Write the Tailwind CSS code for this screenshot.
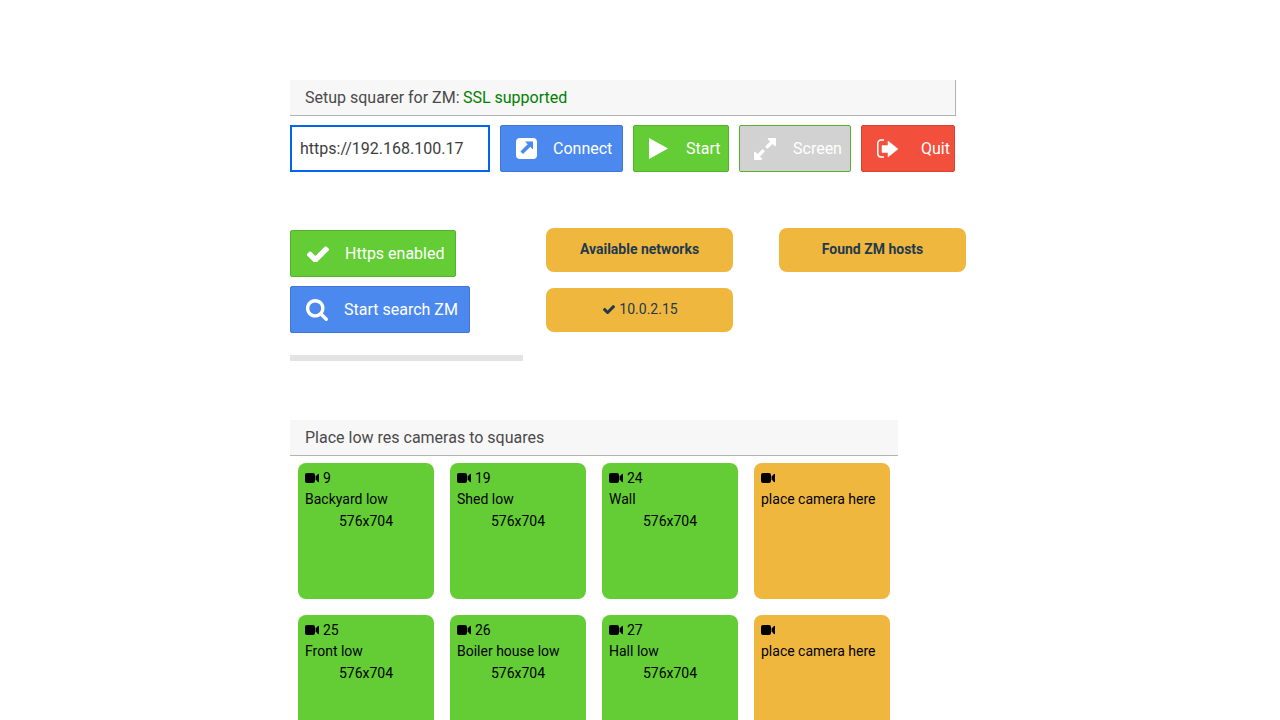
<!DOCTYPE html>
<html><head><meta charset="utf-8"><script src="https://cdn.jsdelivr.net/npm/@tailwindcss/browser@4"></script></head>
<body class="bg-white font-['Roboto',sans-serif] h-[720px] overflow-hidden">
<div class="pl-[290px] pt-[80px] w-[1280px]">
  <div class="w-[666px] h-9 bg-[#f7f7f7] border-b border-r border-[#b3b3b3] pl-[15px] flex items-center text-base text-[#4a4a4a] whitespace-pre">Setup squarer for ZM: <span class="text-[#008000] ml-[-0.6px]">SSL supported</span></div>
  <div class="flex mt-[9px] h-[47px] gap-2.5 w-[665px] overflow-hidden">
    <div class="w-[200px] border-2 border-[#0066ee] pl-2 flex items-center text-base text-[#3d3d3d]">https://192.168.100.17</div>
    <div class="w-[123px] shrink-0 bg-[#4b89ef] border border-[#3f76d3] rounded-[2px] flex items-center pl-[15px] text-white text-base">
      <svg viewBox="0 0 21 21" class="w-[21px] h-[21px] mr-4"><rect width="21" height="21" rx="4" fill="#fff"/><path d="M9 3.500h8v8l-2.700-2.700-7.300 7.300-2.600-2.600 7.300-7.300z" fill="#4b89ef"/></svg>Connect</div>
    <div class="w-[96px] shrink-0 bg-[#64cd35] border border-[#56b02d] rounded-[2px] flex items-center pl-[15px] text-white text-base">
      <svg viewBox="0 0 19 21" class="w-[19px] h-[21px] mr-[18px]"><polygon points="0,0 19,10.500 0,21" fill="#fff"/></svg>Start</div>
    <div class="w-[112px] shrink-0 bg-[#d2d2d2] border border-[#56b02d] rounded-[2px] flex items-center pl-[14px] text-white text-base">
      <svg viewBox="128 128 1536 1536" class="w-[22px] h-[22px] mr-[17px]"><path fill="#fff" d="M883 1056q0 13-10 23l-332 332 144 144q19 19 19 45t-19 45-45 19h-448q-26 0-45-19t-19-45v-448q0-26 19-45t45-19 45 19l144 144 332-332q10-10 23-10t23 10l114 114q10 10 10 23zm781-864v448q0 26-19 45t-45 19-45-19l-144-144-332 332q-10 10-23 10t-23-10l-114-114q-10-10-10-23t10-23l332-332-144-144q-19-19-19-45t19-45 45-19h448q26 0 45 19t19 45z"/></svg>Screen</div>
    <div class="w-[94px] shrink-0 bg-[#f2503c] border border-[#d3452f] rounded-[2px] flex items-center pl-[15px] text-white text-base">
      <svg viewBox="0 0 21 20" class="w-[21px] h-[20px] mr-[23px]"><path d="M7 1H4a3.200 3.200 0 0 0-3.200 3.200v10.600a3.200 3.200 0 0 0 3.200 3.200h3" fill="none" stroke="#fff" stroke-width="1.500"/><path fill="#fff" d="M5 6.500h6v-4.500l10 8-10 8v-4.500h-6z" stroke="#fff" stroke-width=".5" stroke-linejoin="round"/></svg>Quit</div>
  </div>
  <div class="flex mt-[56px] h-[192px]">
    <div class="w-[256px] pt-[2px]">
      <div class="w-[166px] h-[47px] bg-[#64cd35] border border-[#56b02d] rounded-[2px] flex items-center pl-4 text-white text-base">
        <svg viewBox="128 260 1543 1162" class="w-[22px] h-[17px] mr-4"><path fill="#fff" d="M1671 566q0 40-28 68l-724 724-136 136q-28 28-68 28t-68-28l-136-136-362-362q-28-28-28-68t28-68l136-136q28-28 68-28t68 28l294 295 656-657q28-28 68-28t68 28l136 136q28 28 28 68z"/></svg>Https enabled</div>
      <div class="w-[180px] h-[47px] mt-[9px] bg-[#4b89ef] border border-[#3f76d3] rounded-[2px] flex items-center pl-[14px] text-white text-base">
        <svg viewBox="0 128 1728 1664" class="w-[23px] h-[22px] mr-4"><path fill="#fff" d="M1216 832q0-185-131.500-316.500t-316.500-131.500-316.500 131.500-131.500 316.500 131.500 316.500 316.500 131.500 316.500-131.500 131.500-316.500zm512 832q0 52-38 90t-90 38q-54 0-90-38l-343-342q-179 124-399 124-143 0-273.500-55.500t-225-150-150-225-55.500-273.500 55.500-273.500 150-225 225-150 273.500-55.500 273.500 55.500 225 150 150 225 55.500 273.500q0 220-124 399l343 343q37 37 37 90z"/></svg>Start search ZM</div>
      <div class="w-[233px] h-1.5 mt-[22px] bg-[#e3e3e3]"></div>
    </div>
    <div class="w-[233px]">
      <div class="w-[187px] h-11 pb-[2px] bg-[#f0b73f] rounded-lg flex items-center justify-center text-sm font-bold text-[#1f3a4d]">Available networks</div>
      <div class="w-[187px] h-11 mt-4 pb-[2px] pl-[2px] bg-[#f0b73f] rounded-lg flex items-center justify-center text-sm text-[#1f3a4d]">
        <svg viewBox="128 260 1543 1162" class="w-3 h-[10px] mr-1"><path fill="#1f3a4d" d="M1671 566q0 40-28 68l-724 724-136 136q-28 28-68 28t-68-28l-136-136-362-362q-28-28-28-68t28-68l136-136q28-28 68-28t68 28l294 295 656-657q28-28 68-28t68 28l136 136q28 28 28 68z"/></svg>10.0.2.15</div>
    </div>
    <div class="w-[187px] h-11 pb-[2px] bg-[#f0b73f] rounded-lg flex items-center justify-center text-sm font-bold text-[#1f3a4d]">Found ZM hosts</div>
  </div>
  <div class="w-[608px] h-9 bg-[#f7f7f7] border-b border-[#b3b3b3] pl-[15px] flex items-center text-base text-[#4a4a4a]">Place low res cameras to squares</div>
  <div class="w-[608px] grid grid-cols-4 gap-4 px-2 pt-[7px] text-sm leading-[21px] text-black">
    <div class="h-[136px] bg-[#64cd35] rounded-lg px-[7px] pt-[5px]">
      <div class="flex items-center"><svg viewBox="0 0 14 10" class="w-[14px] h-[10px] mr-1 mb-[2px]"><rect width="10" height="10" rx="2"/><path d="M10.600 3.500 13 1q1-.7 1 .5v7q0 1.200-1 .5l-2.400-2.500z"/></svg>9</div>
      <div>Backyard low</div><div class="text-center mt-px">576x704</div></div>
    <div class="h-[136px] bg-[#64cd35] rounded-lg px-[7px] pt-[5px]">
      <div class="flex items-center"><svg viewBox="0 0 14 10" class="w-[14px] h-[10px] mr-1 mb-[2px]"><rect width="10" height="10" rx="2"/><path d="M10.600 3.500 13 1q1-.7 1 .5v7q0 1.200-1 .5l-2.400-2.500z"/></svg>19</div>
      <div>Shed low</div><div class="text-center mt-px">576x704</div></div>
    <div class="h-[136px] bg-[#64cd35] rounded-lg px-[7px] pt-[5px]">
      <div class="flex items-center"><svg viewBox="0 0 14 10" class="w-[14px] h-[10px] mr-1 mb-[2px]"><rect width="10" height="10" rx="2"/><path d="M10.600 3.500 13 1q1-.7 1 .5v7q0 1.200-1 .5l-2.400-2.500z"/></svg>24</div>
      <div>Wall</div><div class="text-center mt-px">576x704</div></div>
    <div class="h-[136px] bg-[#f0b73f] rounded-lg px-[7px] pt-[5px]">
      <div class="flex items-center h-[21px]"><svg viewBox="0 0 14 10" class="w-[14px] h-[10px] mr-1 mb-[2px]"><rect width="10" height="10" rx="2"/><path d="M10.600 3.500 13 1q1-.7 1 .5v7q0 1.200-1 .5l-2.400-2.500z"/></svg></div>
      <div>place camera here</div></div>
    <div class="h-[136px] bg-[#64cd35] rounded-lg px-[7px] pt-[5px]">
      <div class="flex items-center"><svg viewBox="0 0 14 10" class="w-[14px] h-[10px] mr-1 mb-[2px]"><rect width="10" height="10" rx="2"/><path d="M10.600 3.500 13 1q1-.7 1 .5v7q0 1.200-1 .5l-2.400-2.500z"/></svg>25</div>
      <div>Front low</div><div class="text-center mt-px">576x704</div></div>
    <div class="h-[136px] bg-[#64cd35] rounded-lg px-[7px] pt-[5px]">
      <div class="flex items-center"><svg viewBox="0 0 14 10" class="w-[14px] h-[10px] mr-1 mb-[2px]"><rect width="10" height="10" rx="2"/><path d="M10.600 3.500 13 1q1-.7 1 .5v7q0 1.200-1 .5l-2.400-2.500z"/></svg>26</div>
      <div>Boiler house low</div><div class="text-center mt-px">576x704</div></div>
    <div class="h-[136px] bg-[#64cd35] rounded-lg px-[7px] pt-[5px]">
      <div class="flex items-center"><svg viewBox="0 0 14 10" class="w-[14px] h-[10px] mr-1 mb-[2px]"><rect width="10" height="10" rx="2"/><path d="M10.600 3.500 13 1q1-.7 1 .5v7q0 1.200-1 .5l-2.400-2.500z"/></svg>27</div>
      <div>Hall low</div><div class="text-center mt-px">576x704</div></div>
    <div class="h-[136px] bg-[#f0b73f] rounded-lg px-[7px] pt-[5px]">
      <div class="flex items-center h-[21px]"><svg viewBox="0 0 14 10" class="w-[14px] h-[10px] mr-1 mb-[2px]"><rect width="10" height="10" rx="2"/><path d="M10.600 3.500 13 1q1-.7 1 .5v7q0 1.200-1 .5l-2.400-2.500z"/></svg></div>
      <div>place camera here</div></div>
  </div>
</div>
</body></html>
